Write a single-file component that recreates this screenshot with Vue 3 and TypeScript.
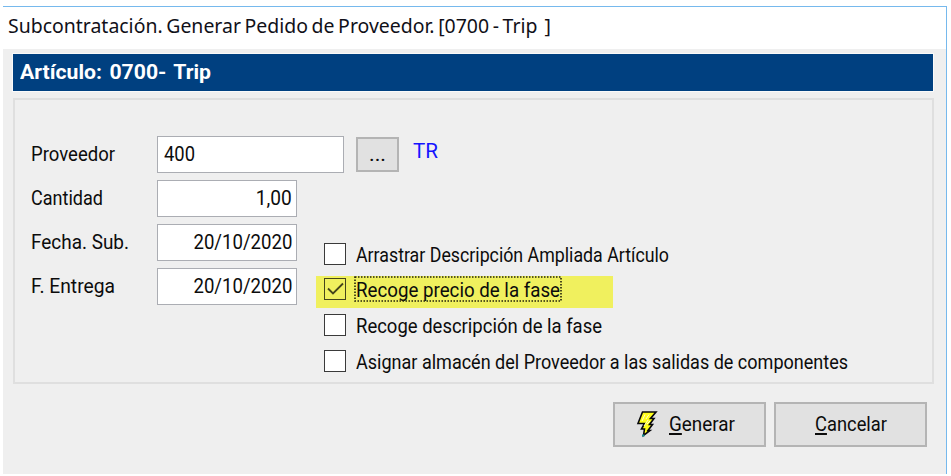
<script setup lang="ts">
import { reactive, type Directive } from 'vue'

interface Field { label: string; labelWidth: number; value: string; valueWidth: number }
interface Option { label: string; width: number; checked: boolean; focused: boolean }

const fields: Field[] = [
  { label: 'Cantidad', labelWidth: 72, value: '1,00', valueWidth: 36 },
  { label: 'Fecha. Sub.', labelWidth: 98, value: '20/10/2020', valueWidth: 99 },
  { label: 'F. Entrega', labelWidth: 84, value: '20/10/2020', valueWidth: 99 },
]

const options = reactive<Option[]>([
  { label: 'Arrastrar Descripción Ampliada Artículo', width: 313, checked: false, focused: false },
  { label: 'Recoge precio de la fase', width: 204, checked: true, focused: true },
  { label: 'Recoge descripción de la fase', width: 246, checked: false, focused: false },
  { label: 'Asignar almacén del Proveedor a las salidas de componentes', width: 492, checked: false, focused: false },
])

// Condenses a run of text so that it takes the given width in its row.
const vFit: Directive<HTMLElement, number> = {
  mounted(el, { value, modifiers }) {
    const natural = el.getBoundingClientRect().width
    el.style.transformOrigin = modifiers.end ? 'right center' : 'left center'
    el.style.transform = `scaleX(${value / natural})`
    el.style[modifiers.end ? 'marginLeft' : 'marginRight'] = `${value - natural}px`
  },
}
</script>

<template>
  <main class="window">
    <header class="titlebar">
      <span v-fit="543" class="fit">Subcontratación. Generar Pedido de Proveedor. [0700 - Trip&nbsp; ]</span>
    </header>
    <section class="body">
      <h1 class="banner"><span v-fit="191" class="fit">Artículo: 0700- Trip</span></h1>
      <div class="panel">
        <div class="row">
          <label class="label"><span v-fit="84" class="fit">Proveedor</span></label>
          <div class="input wide"><span v-fit="31" class="fit">400</span></div>
          <button class="browse"><span v-fit="17" class="fit">...</span></button>
          <span class="supplier"><span v-fit="25" class="fit">TR</span></span>
        </div>
        <div class="columns">
          <div class="fields">
            <div v-for="f in fields" :key="f.label" class="row">
              <label class="label"><span v-fit="f.labelWidth" class="fit">{{ f.label }}</span></label>
              <div class="input"><span v-fit.end="f.valueWidth" class="fit">{{ f.value }}</span></div>
            </div>
          </div>
          <div class="options">
            <div
              v-for="o in options"
              :key="o.label"
              class="option"
              :class="{ highlighted: o.focused }"
              @click="o.checked = !o.checked"
            >
              <span class="box">
                <svg v-if="o.checked" viewBox="0 0 20 20" width="20" height="20">
                  <path d="M3 9.5 8 14.5 18 4.5" fill="none" stroke="#45451c" stroke-width="1.8" />
                </svg>
              </span>
              <span class="caption">
                <span v-fit="o.width" class="fit">{{ o.label }}</span>
                <svg v-if="o.focused" class="focus" width="208" height="26">
                  <rect x="1" y="1" width="206" height="24" fill="none" stroke="#22220c" stroke-width="1.6" stroke-dasharray="1.5 1.5" />
                </svg>
              </span>
            </div>
          </div>
        </div>
      </div>
      <footer class="actions">
        <button class="action generate">
          <svg class="bolt" viewBox="0 0 22 28" width="22" height="28">
            <path d="M6.5 2H20L14.5 8.5H18L13.5 14.5H16.5L12 20.5H14L7.5 25.5L8.5 19H5.5L8.5 13.5H2Z" fill="#ffff18" stroke="#08080c" stroke-width="1.6" stroke-linejoin="miter" />
            <path d="M9 4.5 6 11M13 4.5 10 9M12 10 8 16M14 11 11 14" fill="none" stroke="#fffbd0" stroke-width="1" />
            <path d="M6 24.5h2.5v2H6z" fill="#168a92" />
          </svg>
          <span v-fit="66" class="fit"><u>G</u>enerar</span>
        </button>
        <button class="action"><span v-fit="72" class="fit"><u>C</u>ancelar</span></button>
      </footer>
    </section>
  </main>
</template>

<style>
body { margin: 0; background: #fff; }
</style>

<style scoped>
* { box-sizing: border-box; }
.window {
  width: 944px;
  height: 468px;
  margin: 6px 0 0 3px;
  border-top: 1px solid #76b9ed;
  border-right: 1px solid #76b9ed;
  font: 20px/24px Roboto, "Liberation Sans", sans-serif;
  color: #0c0c0c;
  background: #fff;
}
.fit { display: inline-block; flex: none; white-space: nowrap; }
.titlebar {
  display: flex;
  height: 42px;
  padding: 5px 0 0 5px;
  font: 20px/28px "Noto Sans", "Open Sans", sans-serif;
  word-spacing: -1.5px;
  color: #101018;
}
.body { height: 425px; padding: 4px 12px 0 9px; background: #efefef; }
.banner {
  display: flex;
  height: 39px;
  margin: 0;
  padding: 6px 0 0 7px;
  border: 1px solid #fafafa;
  font-size: 20px;
  font-weight: 700;
  line-height: 24px;
  word-spacing: 2px;
  color: #fff;
  background: #004080;
}
.panel {
  width: 921px;
  height: 286px;
  margin: 6px 0 0 1px;
  padding: 36px 0 0 15px;
  border: 2px solid #dfdfdf;
}
.row { display: flex; height: 37px; }
.label { display: flex; flex: none; width: 127px; padding: 6px 0 0 1px; }
.input {
  display: flex;
  flex: none;
  justify-content: flex-end;
  width: 140px;
  height: 37px;
  padding: 5px 4px 0 6px;
  border: 1.5px solid #abadb3;
  background: #fff;
}
.input.wide { justify-content: flex-start; width: 187px; }
button {
  display: flex;
  margin: 0;
  border: 2px solid #b4b4b4;
  font: inherit;
  color: inherit;
  background: #e1e1e1;
}
.browse { width: 43px; height: 35px; margin: 1px 0 0 12px; padding: 3px 0 0 11px; }
.supplier { display: flex; margin: 3px 0 0 14px; color: #1414ff; }
.columns { display: flex; gap: 19px; margin-top: 7px; }
.fields { display: grid; align-content: start; gap: 7px; }
.options { display: flex; flex-direction: column; gap: 3.7px; padding-top: 60.5px; }
.option { display: flex; width: 297px; height: 32px; padding: 2px 0 0 8px; }
.highlighted { background: #f0f05e; }
.box {
  flex: none;
  width: 22px;
  height: 22px;
  border: 1.5px solid #3a3a3a;
  background: #fff;
}
.highlighted .box { border-color: #45451c; background: transparent; }
.box svg { display: block; }
.caption { position: relative; display: flex; margin-left: 10px; }
.focus { position: absolute; left: -2px; top: -2px; }
.actions { display: flex; justify-content: flex-end; gap: 8px; padding: 18px 7px 0 0; }
.action { justify-content: center; width: 153px; height: 45px; padding: 8px 0 0; }
.generate { justify-content: flex-start; padding-left: 21px; }
.bolt { flex: none; margin: -2px 11px 0 0; }
u { text-decoration-thickness: 1.5px; text-underline-offset: 2px; text-decoration-skip-ink: none; }
</style>
